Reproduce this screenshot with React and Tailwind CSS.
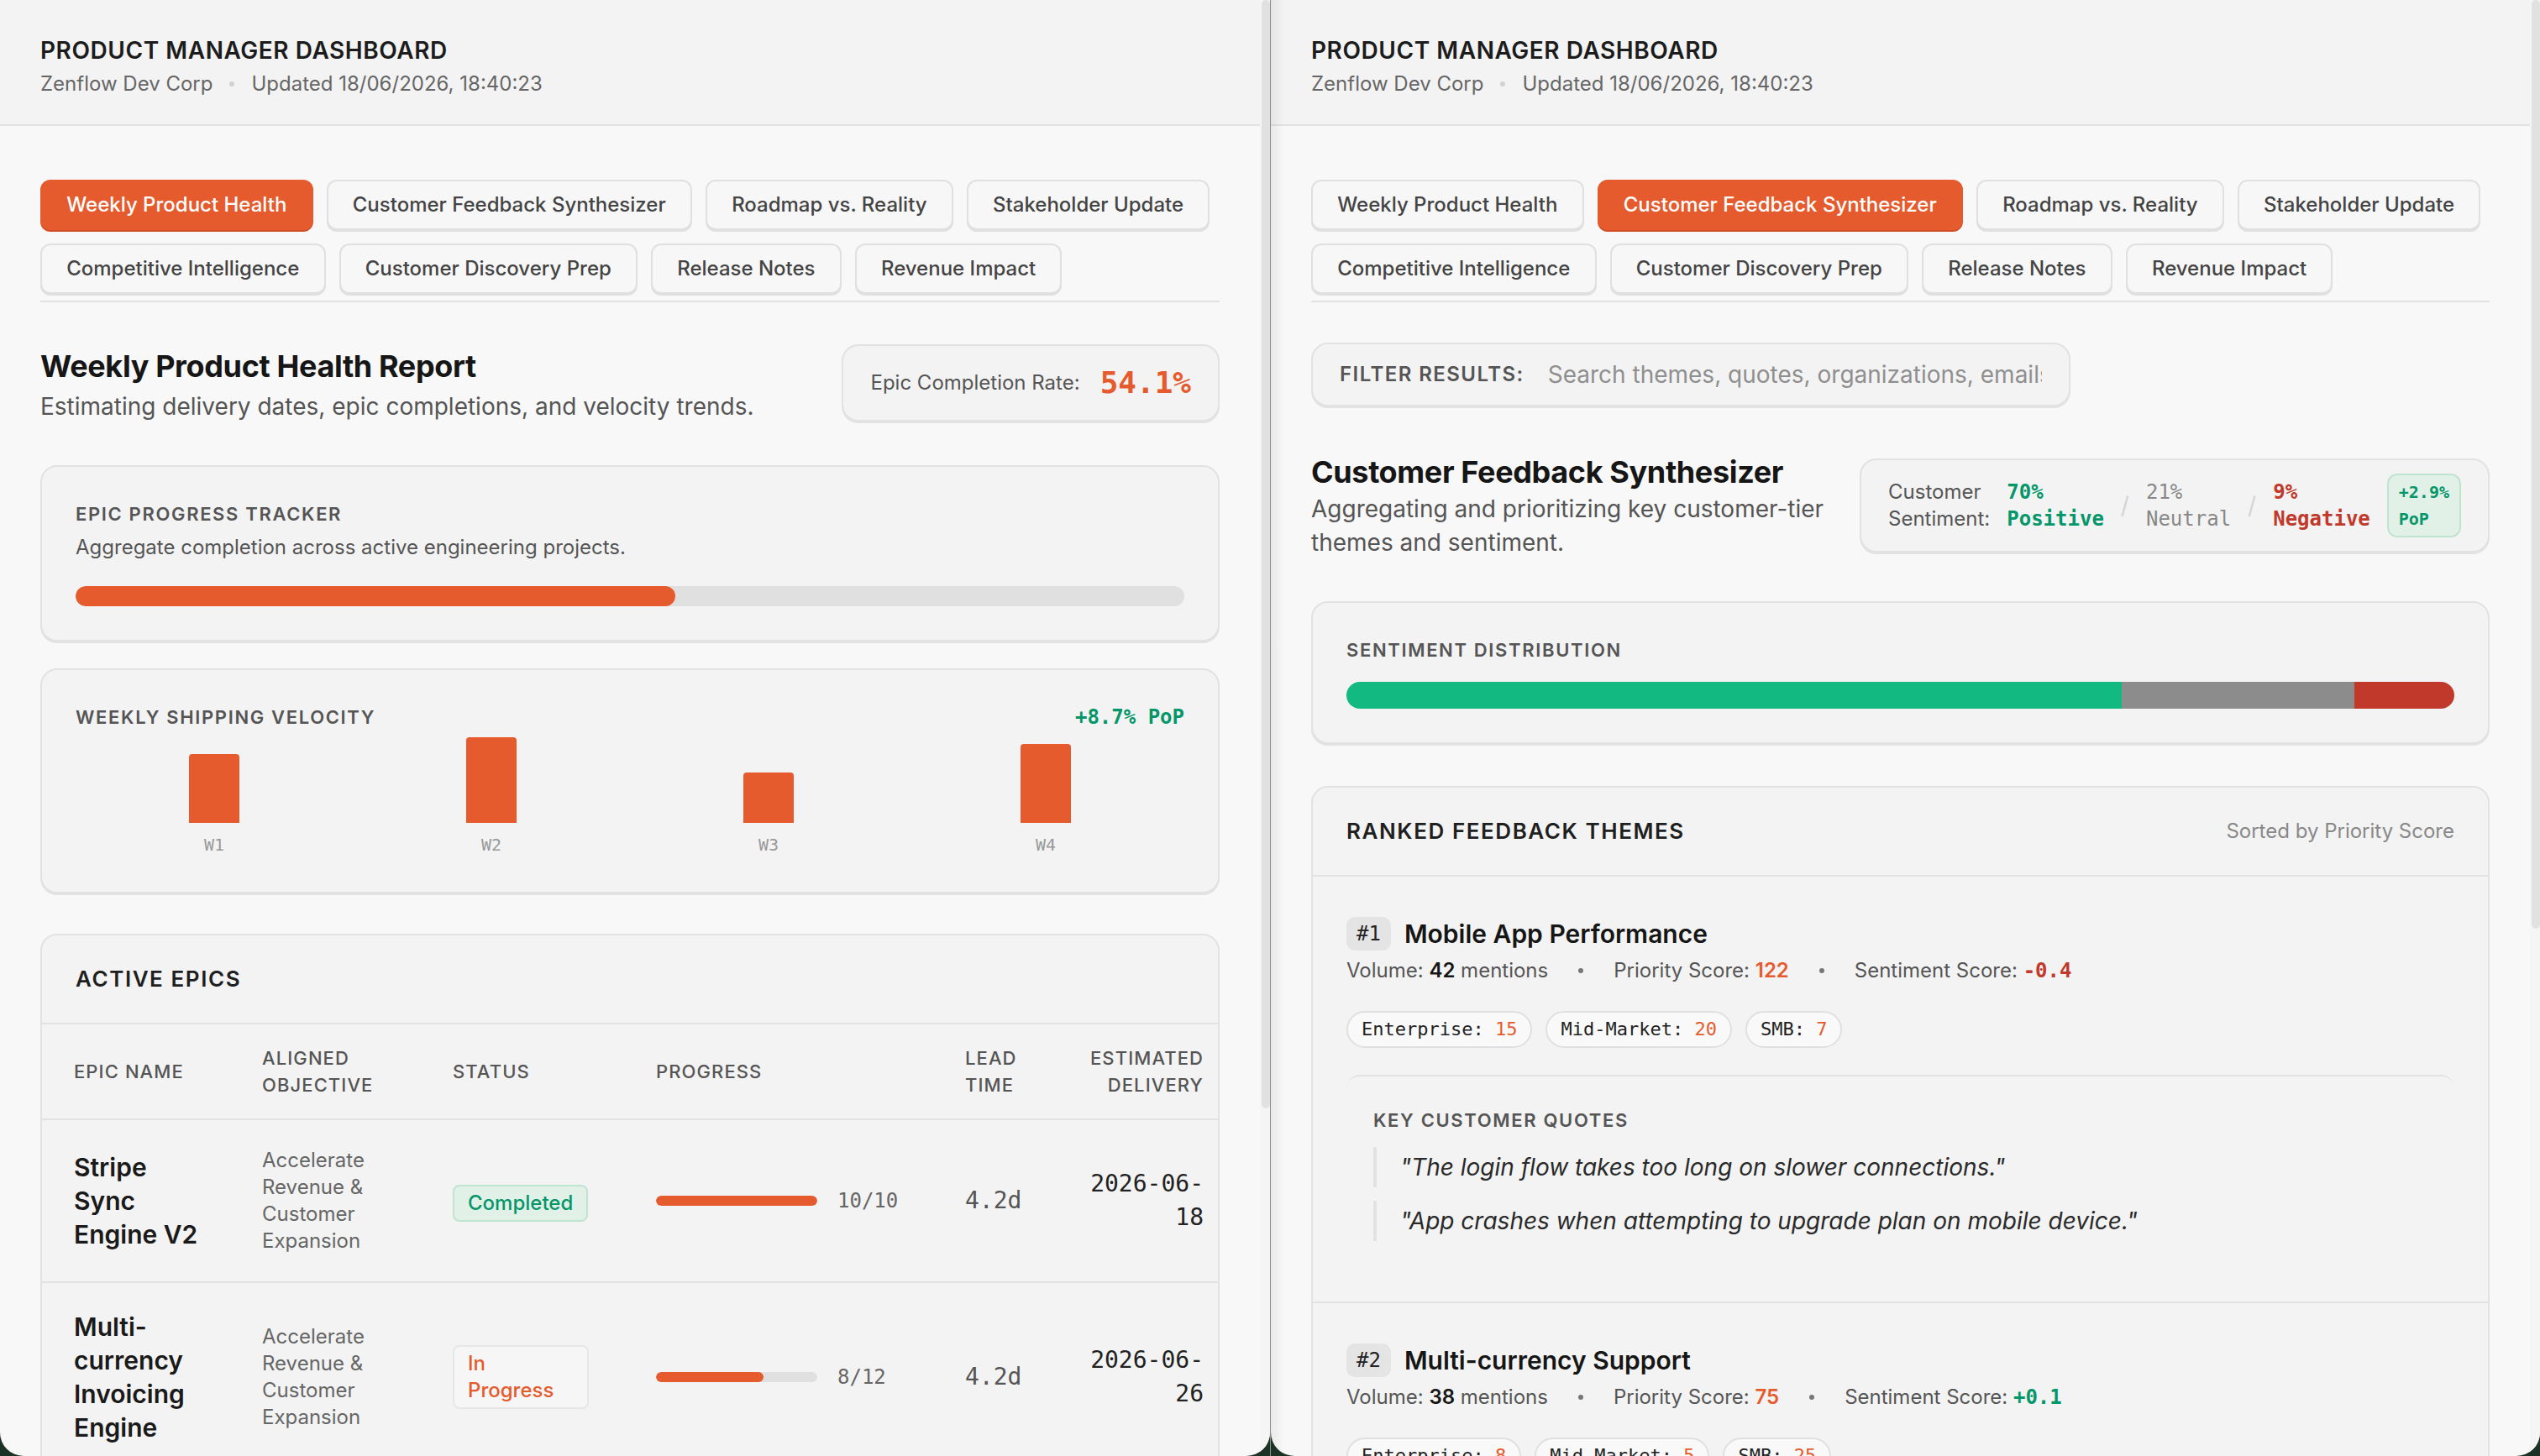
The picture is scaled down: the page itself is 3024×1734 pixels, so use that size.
const SANS = "[font-family:Inter,'Noto_Sans',sans-serif]"
const MONO = "[font-family:'DejaVu_Sans_Mono','Liberation_Mono',monospace]"

const CARD = 'rounded-[10px] border border-[#e2e2e2] bg-[#f3f3f3] shadow-[0_1px_0_#e2e2e2]'
const LABEL = 'text-[11px] leading-4 font-semibold tracking-[0.075em] text-[#555] uppercase'
const CARD_TITLE = 'text-[13px] leading-5 font-semibold tracking-[0.06em] text-[#1f1f1f] uppercase'

const TABS = [
  'Weekly Product Health',
  'Customer Feedback Synthesizer',
  'Roadmap vs. Reality',
  'Stakeholder Update',
  'Competitive Intelligence',
  'Customer Discovery Prep',
  'Release Notes',
  'Revenue Impact',
]

const VELOCITY = [
  { week: 'W1', height: 41 },
  { week: 'W2', height: 51 },
  { week: 'W3', height: 30 },
  { week: 'W4', height: 47 },
]

const EPICS = [
  {
    name: 'Stripe Sync Engine V2',
    objective: 'Accelerate Revenue & Customer Expansion',
    status: 'Completed',
    done: 10,
    total: 10,
    lead: '4.2d',
    delivery: '2026-06-18',
  },
  {
    name: 'Multi-currency Invoicing Engine',
    objective: 'Accelerate Revenue & Customer Expansion',
    status: 'In Progress',
    done: 8,
    total: 12,
    lead: '4.2d',
    delivery: '2026-06-26',
  },
]

const THEMES = [
  {
    rank: 1,
    title: 'Mobile App Performance',
    volume: 42,
    priority: 122,
    sentiment: '-0.4',
    segments: [
      ['Enterprise', 15],
      ['Mid-Market', 20],
      ['SMB', 7],
    ],
    quotes: [
      '"The login flow takes too long on slower connections."',
      '"App crashes when attempting to upgrade plan on mobile device."',
    ],
  },
  {
    rank: 2,
    title: 'Multi-currency Support',
    volume: 38,
    priority: 75,
    sentiment: '+0.1',
    segments: [
      ['Enterprise', 8],
      ['Mid-Market', 5],
      ['SMB', 25],
    ],
    quotes: [],
  },
]

function DashboardHeader() {
  return (
    <header className="flex h-[75px] flex-col justify-center gap-0.5 border-b border-[#e2e2e2] bg-[#f3f3f3] px-6 pt-1">
      <h1 className="text-[14px] leading-5 font-semibold tracking-[0.02em] text-[#1c1c1c]">
        PRODUCT MANAGER DASHBOARD
      </h1>
      <div className="flex items-center text-[12px] leading-4 text-[#666]">
        <span>Zenflow Dev Corp</span>
        <span className="mx-2.5 h-[3px] w-[3px] rounded-full bg-[#d2d2d2]" />
        <span>Updated 18/06/2026, 18:40:23</span>
      </div>
    </header>
  )
}

function TabBar({ active }) {
  return (
    <div className="flex flex-wrap gap-2 border-b border-[#e2e2e2] pb-1">
      {TABS.map((tab, i) => (
        <button
          key={tab}
          type="button"
          className={
            i === active
              ? 'h-[30px] rounded-md border border-[#e55b2d] bg-[#e55b2d] px-[14.6px] text-[12px] font-medium text-white shadow-[0_1px_0_#d14f24]'
              : 'h-[30px] rounded-md border border-[#e0e0e0] bg-[#f7f7f7] px-[14.6px] text-[12px] font-medium text-[#444] shadow-[0_1px_0_#e0e0e0]'
          }
        >
          {tab}
        </button>
      ))}
    </div>
  )
}

function Window({ children, thumb, className }) {
  return (
    <div className={`relative flex h-full shrink-0 overflow-hidden bg-[#f8f8f8] ${className}`}>
      <div className="min-w-0 flex-1">{children}</div>
      <div className="w-[6px] shrink-0 bg-[#f5f5f5] pl-px">
        <div className={`rounded-full bg-[#e1e1e1] ${thumb}`} />
      </div>
    </div>
  )
}

function EpicRow({ epic }) {
  const pct = (epic.done / epic.total) * 100
  const completed = epic.status === 'Completed'
  return (
    <div className="grid grid-cols-[112px_113.5px_121px_184px_67px_75px] items-center border-t border-[#e2e2e2] py-4 pl-[19px]">
      <div className="max-w-[76px] text-[15px] leading-5 font-semibold text-[#1a1a1a]">{epic.name}</div>
      <div className="max-w-[84px] text-[12px] leading-4 text-[#666]">{epic.objective}</div>
      <div>
        <span
          className={
            completed
              ? 'inline-block max-w-[81px] rounded-[4px] border border-[#bfe4cf] bg-[#e2f1e8] px-2 py-0.5 text-[12px] leading-4 font-medium text-[#059669]'
              : 'inline-block max-w-[81px] rounded-[4px] border border-[#e6e6e6] bg-[#f6f6f6] px-2 py-0.5 text-[12px] leading-4 font-medium text-[#e55b2d]'
          }
        >
          {epic.status}
        </span>
      </div>
      <div className="flex items-center gap-3">
        <div className="h-1.5 w-[96px] overflow-hidden rounded-full bg-[#e0e0e0]">
          <div className="h-full rounded-full bg-[#e55b2d]" style={{ width: `${pct}%` }} />
        </div>
        <span className={`${MONO} text-[12px] text-[#666]`}>
          {epic.done}/{epic.total}
        </span>
      </div>
      <div className={`${MONO} text-[14px] text-[#555]`}>{epic.lead}</div>
      <div className={`${MONO} text-right text-[14px] leading-5 text-[#222]`}>{epic.delivery}</div>
    </div>
  )
}

function WeeklyHealth() {
  return (
    <div>
      <DashboardHeader />
      <div className="px-6 pt-8">
        <TabBar active={0} />

        <div className="mt-6 flex items-center justify-between gap-6">
          <div>
            <h2 className="text-[18px] leading-7 font-bold tracking-[-0.01em] text-[#161616]">
              Weekly Product Health Report
            </h2>
            <p className="text-[14px] leading-5 text-[#555]">
              Estimating delivery dates, epic completions, and velocity trends.
            </p>
          </div>
          <div className={`${CARD} flex h-[46px] items-center gap-3 px-4`}>
            <span className="text-[12px] text-[#555]">Epic Completion Rate:</span>
            <span className={`${MONO} text-[18px] font-semibold text-[#e55b2d]`}>54.1%</span>
          </div>
        </div>

        <section className={`${CARD} mt-[25px] p-5`}>
          <h3 className={LABEL}>Epic Progress Tracker</h3>
          <p className="mt-1 text-[12px] leading-4 text-[#555]">
            Aggregate completion across active engineering projects.
          </p>
          <div className="mt-[15px] h-3 overflow-hidden rounded-full bg-[#e0e0e0]">
            <div className="h-full w-[54.1%] rounded-full bg-[#e55b2d]" />
          </div>
        </section>

        <section className={`${CARD} mt-4 p-5`}>
          <div className="flex items-center justify-between">
            <h3 className={LABEL}>Weekly Shipping Velocity</h3>
            <span className={`${MONO} text-[12px] leading-4 font-bold text-[#059669]`}>+8.7% PoP</span>
          </div>
          <div className="grid grid-cols-4">
            {VELOCITY.map((v) => (
              <div key={v.week} className="flex flex-col items-center">
                <div className="flex h-[55px] items-end">
                  <div className="w-[30px] rounded-t-[2px] bg-[#e55b2d]" style={{ height: v.height }} />
                </div>
                <span className={`${MONO} mt-[5px] text-[10px] leading-4 text-[#999]`}>{v.week}</span>
              </div>
            ))}
          </div>
        </section>

        <section className={`${CARD} mt-6 overflow-hidden`}>
          <h3 className={`${CARD_TITLE} border-b border-[#e2e2e2] px-5 py-4`}>Active Epics</h3>
          <div className="grid grid-cols-[112px_113.5px_121px_184px_67px_75px] items-center py-3 pl-[19px] text-[11px] leading-4 font-medium tracking-wider text-[#555] uppercase">
            <span>Epic Name</span>
            <span>Aligned<br />Objective</span>
            <span>Status</span>
            <span>Progress</span>
            <span>Lead<br />Time</span>
            <span className="text-right">Estimated<br />Delivery</span>
          </div>
          {EPICS.map((epic) => (
            <EpicRow key={epic.name} epic={epic} />
          ))}
        </section>
      </div>
    </div>
  )
}

function Dot() {
  return <span className="mx-[18px] h-[3px] w-[3px] rounded-full bg-[#777]" />
}

function ThemeRow({ theme }) {
  const negative = theme.sentiment.startsWith('-')
  return (
    <div className="border-b border-[#e2e2e2] px-5 pt-[22px] pb-5">
      <div className="flex h-6 items-center gap-2">
        <span className={`${MONO} h-5 rounded-[5px] bg-[#e4e4e4] px-1.5 text-[12px] leading-5 text-[#222]`}>
          #{theme.rank}
        </span>
        <h4 className="text-[15px] font-semibold text-[#161616]">{theme.title}</h4>
      </div>
      <div className="flex items-center text-[12px] leading-5 text-[#555]">
        <span>
          Volume: <b className="font-semibold text-[#161616]">{theme.volume}</b> mentions
        </span>
        <Dot />
        <span>
          Priority Score: <b className="font-semibold text-[#e55b2d]">{theme.priority}</b>
        </span>
        <Dot />
        <span>
          Sentiment Score:{' '}
          <b className={`${MONO} font-bold ${negative ? 'text-[#c0392b]' : 'text-[#059669]'}`}>{theme.sentiment}</b>
        </span>
      </div>
      <div className="mt-3.5 flex gap-2">
        {theme.segments.map(([segment, count]) => (
          <span
            key={segment}
            className={`${MONO} rounded-full border border-[#e0e0e0] bg-[#f9f9f9] px-2 py-0.5 text-[11px] leading-4 text-[#222]`}
          >
            {segment}: <span className="text-[#e55b2d]">{count}</span>
          </span>
        ))}
      </div>
      {theme.quotes.length > 0 && (
        <div className="mt-4 rounded-t-lg border-t border-[#e2e2e2] px-4 pt-[18px] pb-4">
          <h5 className={`${LABEL} mb-2`}>Key Customer Quotes</h5>
          <div className="space-y-2">
            {theme.quotes.map((q) => (
              <p key={q} className="border-l-2 border-[#e2e2e2] py-0.5 pl-3.5 text-[14px] leading-5 text-[#2a2a2a] italic">
                {q}
              </p>
            ))}
          </div>
        </div>
      )}
    </div>
  )
}

function FeedbackSynthesizer() {
  return (
    <div>
      <DashboardHeader />
      <div className="px-6 pt-8">
        <TabBar active={1} />

        <div className={`${CARD} mt-6 flex h-[38px] w-fit items-center gap-3.5 px-4`}>
          <span className="text-[12px] font-semibold tracking-[0.06em] text-[#555] uppercase">Filter Results:</span>
          <input
            type="text"
            placeholder="Search themes, quotes, organizations, emails..."
            className="w-[294px] bg-transparent text-[14px] text-[#333] outline-none placeholder:text-[#8f8f8f]"
          />
        </div>

        <div className="mt-[27px] flex items-center justify-between gap-4">
          <div className="min-w-0 flex-1">
            <h2 className="text-[18px] leading-6 font-bold tracking-[-0.01em] text-[#161616]">
              Customer Feedback Synthesizer
            </h2>
            <p className="text-[14px] leading-5 text-[#555]">
              Aggregating and prioritizing key customer-tier themes and sentiment.
            </p>
          </div>
          <div className={`${CARD} flex items-center gap-2.5 px-4 py-2`}>
            <div className="text-[12px] leading-4 text-[#555]">
              <div>Customer</div>
              <div>Sentiment:</div>
            </div>
            <div className={`${MONO} text-[12px] leading-4 font-bold text-[#059669]`}>
              <div>70%</div>
              <div>Positive</div>
            </div>
            <span className="text-[14px] text-[#d4d4d4]">/</span>
            <div className={`${MONO} text-[12px] leading-4 text-[#888]`}>
              <div>21%</div>
              <div>Neutral</div>
            </div>
            <span className="text-[14px] text-[#d4d4d4]">/</span>
            <div className={`${MONO} text-[12px] leading-4 font-bold text-[#c0392b]`}>
              <div>9%</div>
              <div>Negative</div>
            </div>
            <div
              className={`${MONO} rounded-md border border-[#bfe4cf] bg-[#e2f1e8] px-1.5 py-0.5 text-[10px] leading-4 font-bold text-[#059669]`}
            >
              <div>+2.9%</div>
              <div>PoP</div>
            </div>
          </div>
        </div>

        <section className={`${CARD} mt-[25px] p-5`}>
          <h3 className={LABEL}>Sentiment Distribution</h3>
          <div className="mt-[11px] flex h-4 overflow-hidden rounded-full">
            <div className="w-[70%] bg-[#12b981]" />
            <div className="w-[21%] bg-[#8c8c8c]" />
            <div className="w-[9%] bg-[#c0392b]" />
          </div>
        </section>

        <section className={`${CARD} mt-[25px] overflow-hidden`}>
          <div className="flex items-center justify-between border-b border-[#e2e2e2] px-5 py-4">
            <h3 className={CARD_TITLE}>Ranked Feedback Themes</h3>
            <span className="text-[12px] text-[#888]">Sorted by Priority Score</span>
          </div>
          {THEMES.map((theme) => (
            <ThemeRow key={theme.rank} theme={theme} />
          ))}
        </section>
      </div>
    </div>
  )
}

export default function App() {
  return (
    <div className={`${SANS} flex h-[867px] w-[1512px] overflow-hidden bg-[#1b3326] [zoom:2]`}>
      <Window className="w-[756px] rounded-b-[14px]" thumb="h-[660px]">
        <WeeklyHealth />
      </Window>
      <div className="w-[0.5px] shrink-0 bg-[#8e8e8e]" />
      <Window className="w-[755.5px] rounded-b-[14px]" thumb="h-[553px]">
        <FeedbackSynthesizer />
        <div className="pointer-events-none absolute inset-y-0 left-0 w-2 bg-linear-to-r from-black/[0.06] to-transparent" />
      </Window>
    </div>
  )
}
